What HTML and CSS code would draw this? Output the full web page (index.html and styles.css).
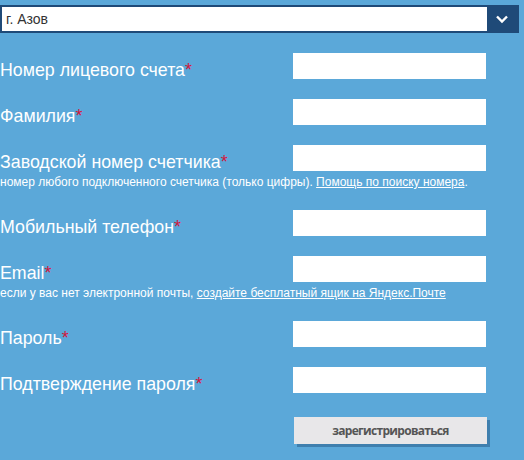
FILE: index.html
```html
<!DOCTYPE html>
<html lang="ru">
<head>
<meta charset="utf-8">
<title>Регистрация</title>
<link rel="stylesheet" href="styles.css">
</head>
<body>
<div class="page">
  <div class="select">
    <span class="select-text">г. Азов</span>
    <span class="select-arrow">
      <svg width="14" height="10" viewBox="0 0 14 10"><path d="M2 2.5 L7 7.5 L12 2.5" fill="none" stroke="#fff" stroke-width="2.4"/></svg>
    </span>
  </div>
  <form class="form">
    <div class="row">
      <label class="label">Номер лицевого счета<span class="req">*</span></label>
      <input class="input" type="text">
    </div>
    <div class="row">
      <label class="label">Фамилия<span class="req">*</span></label>
      <input class="input" type="text">
    </div>
    <div class="row">
      <label class="label">Заводской номер счетчика<span class="req">*</span></label>
      <input class="input" type="text">
      <div class="hint">номер любого подключенного счетчика (только цифры). <a href="#">Помощь по поиску номера</a>.</div>
    </div>
    <div class="row">
      <label class="label">Мобильный телефон<span class="req">*</span></label>
      <input class="input" type="text">
    </div>
    <div class="row">
      <label class="label">Email<span class="req">*</span></label>
      <input class="input" type="text">
      <div class="hint">если у вас нет электронной почты, <a href="#">создайте бесплатный ящик на Яндекс.Почте</a></div>
    </div>
    <div class="row">
      <label class="label">Пароль<span class="req">*</span></label>
      <input class="input" type="password">
    </div>
    <div class="row">
      <label class="label">Подтверждение пароля<span class="req">*</span></label>
      <input class="input" type="password">
    </div>
    <div class="actions">
      <button class="btn" type="button">зарегистрироваться</button>
    </div>
  </form>
</div>
</body>
</html>
```
FILE: styles.css
```css
html, body {
  margin: 0;
  padding: 0;
  background: #5ba8d9;
}
body {
  font-family: "Liberation Sans", Arial, sans-serif;
  color: #fff;
}
.page {
  width: 524px;
  height: 460px;
  overflow: hidden;
  padding-top: 5px;
  box-sizing: border-box;
}
.select {
  width: 519px;
  height: 28px;
  box-sizing: border-box;
  border: 2px solid #1f4a78;
  background: #fff;
  display: flex;
  align-items: center;
}
.select-text {
  flex: 1;
  padding-left: 4px;
  font-size: 14px;
  color: #333;
}
.select-arrow {
  width: 30px;
  height: 100%;
  background: #1f4a78;
  display: flex;
  align-items: center;
  justify-content: center;
}
.form {
  margin: 20px 0 0;
}
.row {
  display: grid;
  grid-template-columns: 293px 193px;
  grid-template-rows: 26px;
  margin-bottom: 20px;
}
.label {
  align-self: end;
  font-size: 17.8px;
  line-height: 20px;
  margin-bottom: -1px;
  white-space: nowrap;
}
.req {
  color: #d3163c;
}
.input {
  width: 193px;
  height: 26px;
  box-sizing: border-box;
  border: 0;
  margin: 0;
  padding: 0 4px;
  background: #fff;
  outline: none;
}
.hint {
  grid-column: 1 / 3;
  font-size: 12px;
  line-height: 16px;
  padding-top: 3px;
  white-space: nowrap;
}
.hint a {
  color: #fff;
}
.actions {
  padding-left: 294px;
  padding-top: 4px;
}
.btn {
  width: 193px;
  height: 27px;
  border: 0;
  margin: 0;
  padding: 0;
  background: #e8e7e9;
  box-shadow: 3px 3px 0 #3f7fae;
  font-family: "Open Sans", sans-serif;
  font-weight: 700;
  font-size: 12px;
  letter-spacing: -0.7px;
  color: #555;
  cursor: pointer;
}
```
